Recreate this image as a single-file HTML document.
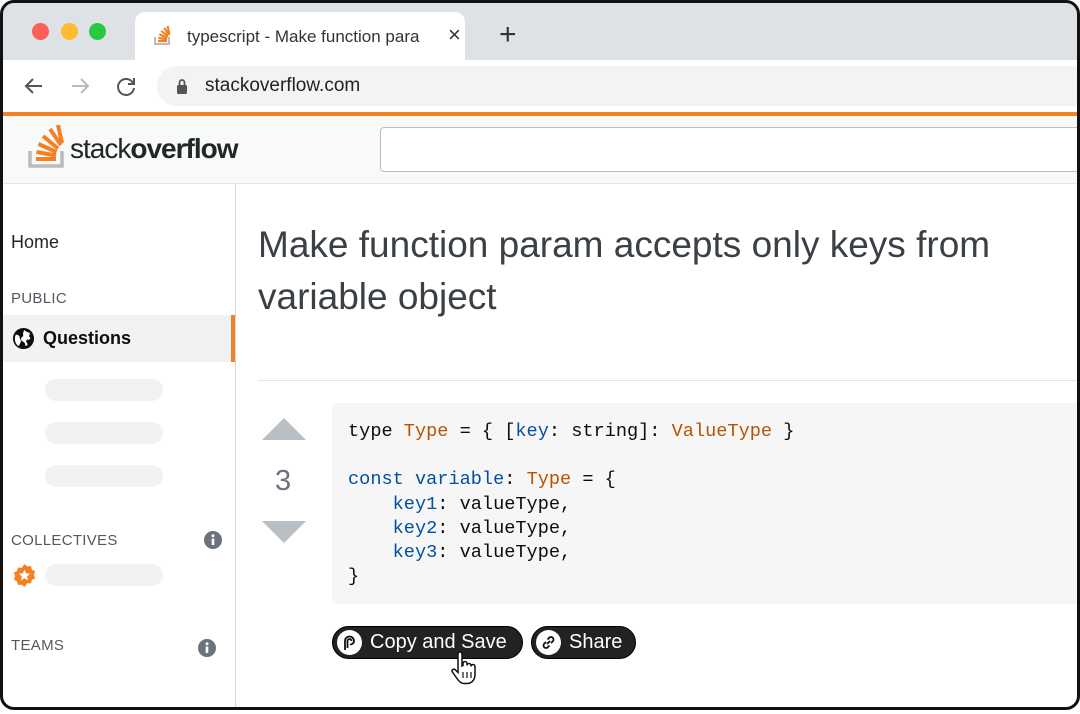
<!DOCTYPE html>
<html><head><meta charset="utf-8"><style>
*{box-sizing:border-box;margin:0;padding:0}
body{width:1080px;height:710px;overflow:hidden;background:#fff;font-family:"Liberation Sans",sans-serif;position:relative}
.frame{position:absolute;inset:0;border:3px solid #111;border-radius:14px;z-index:10;pointer-events:none;box-shadow:0 0 0 20px #fff}
.abs{position:absolute}
.tabbar{left:0;top:0;width:1080px;height:60px;background:#dee1e6}
.dot{width:17px;height:17px;border-radius:50%;top:23px}
.tab{left:135px;top:12px;width:330px;height:50px;background:#fff;border-radius:10px 10px 0 0}
.addr{left:0;top:60px;width:1080px;height:52px;background:#fff}
.omni{left:157px;top:66px;width:940px;height:40px;background:#f1f3f4;border-radius:20px}
.orange{left:0;top:112px;width:1080px;height:4px;background:#f48024}
.header{left:0;top:116px;width:1080px;height:68px;background:#f8f9f9;border-bottom:1px solid #e3e6e8}
.search{left:380px;top:127px;width:720px;height:45px;background:#fff;border:1px solid #babfc4;border-radius:4px}
.side{left:0;top:184px;width:236px;height:530px;border-right:1px solid #d6d9dc;background:#fff}
.pill{background:#f1f2f3;border-radius:12px;height:22px;width:118px;left:45px}
.lbl{font-size:15px;color:#525960;letter-spacing:.3px}
code,.mono{font-family:"Liberation Mono",monospace}
.k{color:#00509e}.t{color:#b75301}
.btn{background:#222;color:#fff;border-radius:17px;height:33px;top:626px;font-size:20px;display:flex;align-items:center;border:1px solid #000}
.ic{width:25px;height:25px;border-radius:50%;background:#fff;margin:0 8px 0 4px;display:flex;align-items:center;justify-content:center}
</style></head><body>
<div class="abs tabbar"></div>
<div class="abs dot" style="left:32px;background:#fe5f57"></div>
<div class="abs dot" style="left:61px;background:#febc2e"></div>
<div class="abs dot" style="left:89px;background:#28c840"></div>
<div class="abs tab"></div>
<svg class="abs" style="left:153px;top:24px" width="20" height="22" viewBox="0 0 20 22"><path d="M2 13v7h14v-7" fill="none" stroke="#bcbbbb" stroke-width="2"/><g stroke="#f48024" stroke-width="2.2"><path d="M5 17h9M5.3 13.8l8.8 1.6M6.3 10.3l8 3.7M8.2 6.8l6.8 5.5M11.2 3.8l4.8 7.2M14.6 2l1.8 8.3"/></g></svg>
<div class="abs" style="left:187px;top:27px;font-size:17px;color:#333;width:254px;white-space:nowrap;overflow:hidden">typescript - Make function para</div>
<div class="abs" style="left:448px;top:22px;font-size:22px;color:#333">×</div>
<div class="abs" style="left:499px;top:18px;font-size:30px;color:#333;font-weight:300">+</div>
<div class="abs addr"></div>
<svg class="abs" style="left:22px;top:74px" width="120" height="24" viewBox="0 0 120 24"><g fill="none" stroke-width="2"><path d="M20 12H4M11 5l-7 7 7 7" stroke="#555"/><path d="M50 12h16M59 5l7 7-7 7" stroke="#bbb"/><path d="M111 9a8 8 0 1 0 1 5" stroke="#555"/><path d="M112 4v6h-6" stroke="#555"/></g></svg>
<div class="abs omni"></div>
<svg class="abs" style="left:176px;top:78px" width="12" height="16" viewBox="0 0 12 16"><rect x="1" y="7" width="10" height="9" rx="1.5" fill="#555"/><path d="M3.5 7V4.5a2.5 2.5 0 0 1 5 0V7" stroke="#555" stroke-width="1.8" fill="none"/></svg>
<div class="abs" style="left:205px;top:75px;font-size:19px;color:#222">stackoverflow.com</div>
<div class="abs orange"></div>
<div class="abs header"></div>
<svg class="abs" style="left:28px;top:125px" width="40" height="44" viewBox="0 0 40 44"><path d="M2 26v15h32v-15" fill="none" stroke="#bcbbbb" stroke-width="3.5"/><g stroke="#f48024" stroke-width="4"><path d="M8 34h20M8.5 27l19.5 3.5M10.5 19l18 8M15 11l15 12.5M22 4l11 16M30 0l4 18"/></g></svg>
<div class="abs" style="left:70px;top:133px;font-size:28px;color:#232629;letter-spacing:-1px">stack<b>overflow</b></div>
<div class="abs search"></div>
<div class="abs side"></div>
<div class="abs" style="left:11px;top:232px;font-size:18px;color:#232629">Home</div>
<div class="abs lbl" style="left:11px;top:290px">PUBLIC</div>
<div class="abs" style="left:3px;top:315px;width:232px;height:47px;background:#f1f2f3;border-right:4px solid #f48024"></div>
<svg class="abs" style="left:12px;top:327px" width="23" height="23" viewBox="0 0 24 24"><circle cx="12" cy="12" r="11" fill="#0c0d0e"/><path d="M4 8c2 0 4 1 4 3s2 2 1 5l-2 4C3 18 2 12 4 8zM13 3c1 2 3 2 5 3s-1 3 0 4 2 2 0 3-2-1-3 1 2 3 1 5l-2 1c0-3-1-4-3-5s-2-4 0-5-1-2 2-7z" fill="#fff"/></svg>
<div class="abs" style="left:43px;top:328px;font-size:18px;font-weight:bold;color:#0c0d0e">Questions</div>
<div class="abs pill" style="top:379px"></div>
<div class="abs pill" style="top:422px"></div>
<div class="abs pill" style="top:465px"></div>
<div class="abs lbl" style="left:11px;top:532px">COLLECTIVES</div>
<svg class="abs" style="left:204px;top:531px" width="18" height="18" viewBox="0 0 18 18"><circle cx="9" cy="9" r="9" fill="#6a737c"/><rect x="7.7" y="7.5" width="2.6" height="6.5" fill="#fff"/><circle cx="9" cy="4.8" r="1.5" fill="#fff"/></svg>
<div class="abs pill" style="top:564px"></div>
<svg class="abs" style="left:12px;top:563px" width="25" height="25" viewBox="0 0 24 24"><path d="M12 1l2.7 2.3 3.5-.4.9 3.4 3.1 1.7-1.2 3.3 1.2 3.3-3.1 1.7-.9 3.4-3.5-.4L12 23l-2.7-2.3-3.5.4-.9-3.4-3.1-1.7 1.2-3.3-1.2-3.3 3.1-1.7.9-3.4 3.5.4z" fill="#f48024"/><path d="M12 6.5l1.6 3.4 3.7.4-2.8 2.5.8 3.7L12 14.6l-3.3 1.9.8-3.7-2.8-2.5 3.7-.4z" fill="#fff"/></svg>
<div class="abs lbl" style="left:11px;top:637px">TEAMS</div>
<svg class="abs" style="left:198px;top:639px" width="18" height="18" viewBox="0 0 18 18"><circle cx="9" cy="9" r="9" fill="#6a737c"/><rect x="7.7" y="7.5" width="2.6" height="6.5" fill="#fff"/><circle cx="9" cy="4.8" r="1.5" fill="#fff"/></svg>
<div class="abs" style="left:258px;top:219px;font-size:37px;line-height:52px;color:#3b4045;width:810px">Make function param accepts only keys from variable object</div>
<div class="abs" style="left:258px;top:380px;width:830px;height:1px;background:#e3e6e8"></div>
<svg class="abs" style="left:261px;top:416px" width="46" height="130" viewBox="0 0 46 130"><path d="M1 24h44L23 2z" fill="#babfc4"/><path d="M1 105h44L23 127z" fill="#babfc4"/></svg>
<div class="abs" style="left:275px;top:465px;font-size:29px;color:#6a737c">3</div>
<div class="abs" style="left:332px;top:403px;width:760px;height:201px;background:#f6f6f6;border-radius:5px"></div>
<pre class="abs mono" style="left:348px;top:420px;font-size:18.6px;line-height:24.2px;color:#0c0d0e">type <span class="t">Type</span> = { [<span class="k">key</span>: string]: <span class="t">ValueType</span> }

<span class="k">const</span> <span class="k">variable</span>: <span class="t">Type</span> = {
    <span class="k">key1</span>: valueType,
    <span class="k">key2</span>: valueType,
    <span class="k">key3</span>: valueType,
}</pre>
<div class="abs btn" style="left:332px;width:191px"><div class="ic"><svg width="17" height="19" viewBox="0 0 17 19"><path d="M4 17V8a4.5 4.5 0 1 1 9 0c0 3-3 3.5-4 3.5M6.5 15V8a2 2 0 0 1 4 0" fill="none" stroke="#111" stroke-width="1.8"/></svg></div>Copy and Save</div>
<div class="abs btn" style="left:531px;width:105px"><div class="ic"><svg width="17" height="17" viewBox="0 0 17 17"><g fill="none" stroke="#111" stroke-width="1.8"><path d="M7 10l3-3"/><path d="M6 8L4 10a2.5 2.5 0 0 0 3.5 3.5l2-2M11 9l2-2A2.5 2.5 0 0 0 9.5 3.5l-2 2"/></g></svg></div>Share</div>
<svg class="abs" style="left:450px;top:651px" width="32" height="36" viewBox="0 0 32 36"><path d="M8 3a2 2 0 0 1 4 0v12l1-.5v-2a2 2 0 0 1 4 0v2a2 2 0 0 1 4 0v1a2 2 0 0 1 4 0v8c0 5-3 9-8 9h-3c-3 0-5-2-7-5l-5-7a2 2 0 0 1 3-2l3 3z" fill="#fff" stroke="#111" stroke-width="1.5"/><path d="M13 21v6M17 21v6M21 21v6" stroke="#111" stroke-width="1.2"/></svg>
<div class="frame"></div>
</body></html>
